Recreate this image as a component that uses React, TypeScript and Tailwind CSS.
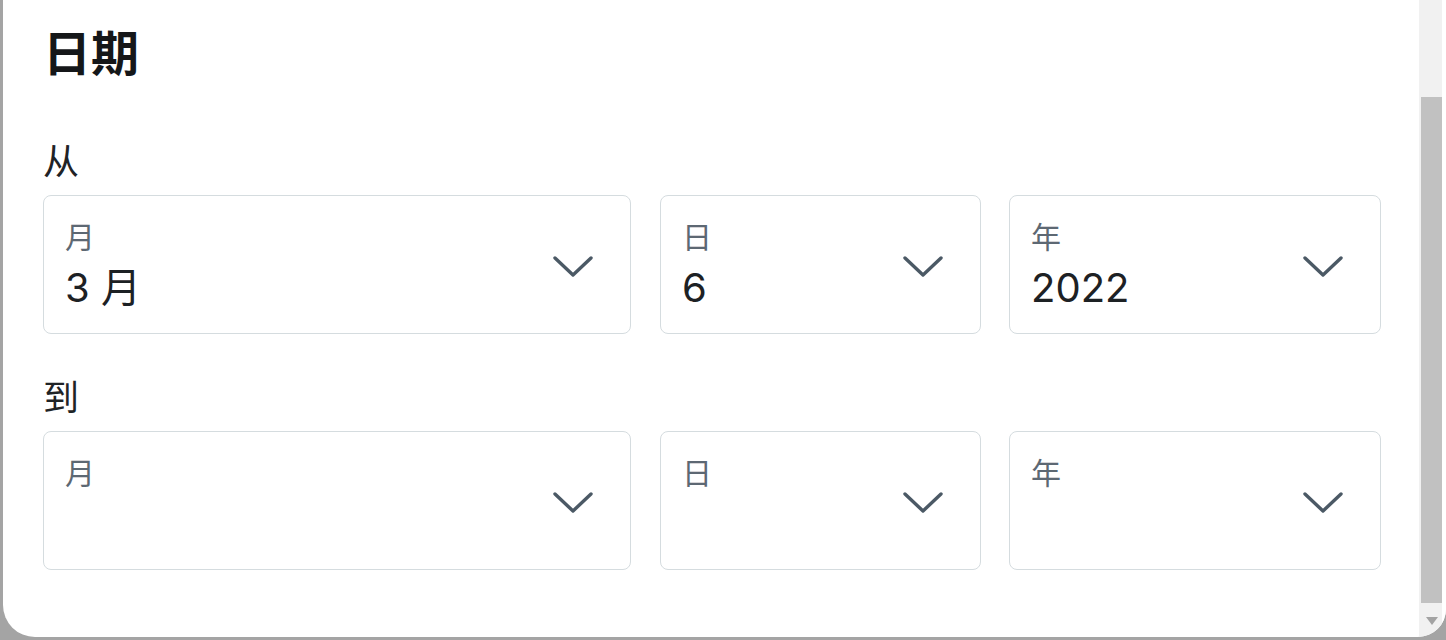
import React from "react";

const cjk = { fontFamily: '"Noto Sans CJK SC", sans-serif' };
const mixed = { fontFamily: 'Inter, "Noto Sans CJK SC", sans-serif' };

function Chevron() {
  return (
    <svg width="40" height="24" viewBox="0 0 40 24" className="shrink-0">
      <polyline
        points="2,3 20,20 38,3"
        fill="none"
        stroke="#4b5965"
        strokeWidth="3.4"
        strokeLinecap="round"
        strokeLinejoin="round"
      />
    </svg>
  );
}

function Field({ label, value, className }: { label: string; value?: string; className: string }) {
  return (
    <div
      className={
        "h-[139px] rounded-[8px] border border-[#d5dcdf] bg-white flex items-center justify-between pl-[21px] pr-[37px] " +
        className
      }
    >
      <div className="flex flex-col self-start pt-[24px]">
        <div className="h-[30px] flex items-center text-[30px] leading-[30px] text-[#5d6873]" style={cjk}>
          {label}
        </div>
        <div className="h-[40px] mt-[18px] flex items-center text-[40px] leading-[40px] text-[#1d2124]" style={mixed}>
          {value ?? ""}
        </div>
      </div>
      <div className="mt-[4px]">
        <Chevron />
      </div>
    </div>
  );
}

function Row({ values }: { values: (string | undefined)[] }) {
  return (
    <div className="flex">
      <Field className="w-[588px]" label="月" value={values[0]} />
      <Field className="w-[321px] ml-[29px]" label="日" value={values[1]} />
      <Field className="w-[372px] ml-[28px]" label="年" value={values[2]} />
    </div>
  );
}

export default function App() {
  return (
    <div className="w-[1446px] h-[640px] bg-[#a4a4a4] pl-[3px] pb-[3px] overflow-hidden">
      <div className="h-full bg-white rounded-bl-[32px] rounded-br-[28px] overflow-hidden flex">
        <div className="flex-1 pl-[40px] pr-[38px]">
          <div className="h-[100px] flex items-center text-[48px] leading-[48px] font-bold text-[#151719]" style={cjk}>
            日期
          </div>
          <div className="mt-[34px] h-[50px] flex items-center text-[36px] leading-[36px] text-[#1f2326]" style={cjk}>
            从
          </div>
          <div className="mt-[11px]">
            <Row values={["3 月", "6", "2022"]} />
          </div>
          <div className="mt-[36px] h-[50px] flex items-center text-[36px] leading-[36px] text-[#1f2326]" style={cjk}>
            到
          </div>
          <div className="mt-[11px]">
            <Row values={[undefined, undefined, undefined]} />
          </div>
        </div>
        <div className="w-[23px] h-full bg-[#f1f1f1] flex flex-col pl-[2px]">
          <div className="h-[97px]" />
          <div className="h-[506px] bg-[#c1c1c1]" />
          <div className="flex-1 flex justify-center pt-[14px]">
            <svg width="12" height="8" viewBox="0 0 12 8">
              <polygon points="0,0 12,0 6,8" fill="#a3a3a3" />
            </svg>
          </div>
        </div>
        <div className="w-[4px] h-full bg-white" />
      </div>
    </div>
  );
}
